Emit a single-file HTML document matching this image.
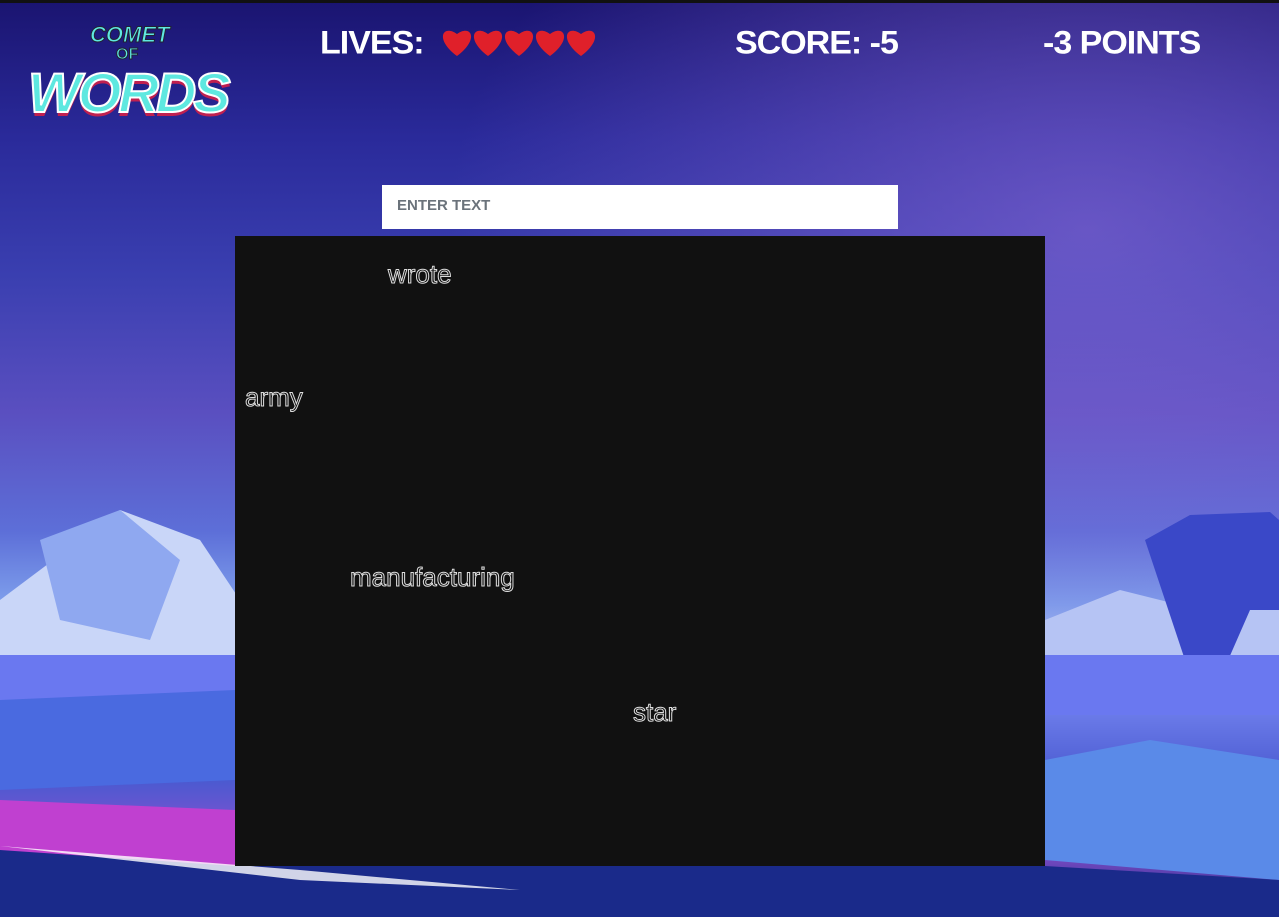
<!DOCTYPE html>
<html><head><style>
*{margin:0;padding:0;box-sizing:border-box}
body{width:1279px;height:917px;overflow:hidden;position:relative;font-family:"Liberation Sans",sans-serif;
background:linear-gradient(180deg,#1a1470 0%,#2a2a9a 15%,#3a3fb0 30%,#5a4fc0 45%,#5d6fd8 58%,#7fa0ec 66%,#b8c8f4 72%,#6a7ae8 78%,#4a5ad0 85%,#8a50d0 92%,#1a2a80 100%);}
.bgl{position:absolute;inset:0}
.hdr{position:absolute;color:#fff;font-weight:bold;font-size:34px;letter-spacing:0px;top:24px;transform:scaleY(0.95)}
.game{position:absolute;left:235px;top:236px;width:810px;height:630px;background:#111}
.w{position:absolute;font-size:26px;color:#111;-webkit-text-stroke:1px #ddd}
.inp{position:absolute;left:382px;top:185px;width:516px;height:44px;background:#fff;color:#6b737b;font-weight:bold;font-size:15px;padding:12px 15px}
</style></head><body>
<svg class="bgl" width="1279" height="917" viewBox="0 0 1279 917">
<defs><radialGradient id="g1" cx="0.85" cy="0.25" r="0.5"><stop offset="0" stop-color="#8a6ad8" stop-opacity=".6"/><stop offset="1" stop-color="#8a6ad8" stop-opacity="0"/></radialGradient></defs>
<rect width="1279" height="917" fill="url(#g1)"/>
<polygon points="0,600 120,510 200,540 240,600 235,700 0,700" fill="#c9d6f8"/>
<polygon points="40,540 120,510 180,560 150,640 60,620" fill="#8fa8f0"/>
<polygon points="1045,620 1120,590 1200,610 1279,600 1279,700 1045,700" fill="#b6c4f4"/>
<polygon points="1145,540 1190,515 1270,512 1279,520 1279,610 1250,610 1215,690 1195,690 1165,600" fill="#3a48c8"/>
<rect x="0" y="655" width="1279" height="60" fill="#6a78f0"/>
<polygon points="0,700 235,690 235,780 0,790" fill="#4a6ae0"/>
<polygon points="1045,760 1150,740 1279,760 1279,880 1045,860" fill="#5a8ae8"/>
<polygon points="0,800 235,810 235,866 0,870" fill="#c040d0"/>
<polygon points="0,850 235,866 1045,866 1279,880 1279,917 0,917" fill="#1a2a8a"/>
<polygon points="0,846 300,880 520,890 300,870" fill="#fff" opacity=".8"/>
<rect x="0" y="0" width="1279" height="3" fill="#111"/>
</svg>
<div style="position:absolute;left:28px;top:22px;width:200px;height:110px">
<div style="position:absolute;left:62px;top:0;color:#5ee8e0;font-weight:bold;font-size:22px;font-style:italic;-webkit-text-stroke:1px #223">COMET</div>
<div style="position:absolute;left:88px;top:24px;color:#5ee8e0;font-weight:bold;font-size:16px;-webkit-text-stroke:1px #223">OF</div>
<div style="position:absolute;left:0;top:38px;color:#5ee8e0;font-weight:bold;font-size:56px;font-style:italic;letter-spacing:-3px;-webkit-text-stroke:2px #fff;text-shadow:0 4px 0 #c02050">WORDS</div>
</div>
<div class="hdr" style="left:320px;letter-spacing:-1px">LIVES:</div>
<svg style="position:absolute;left:441px;top:27px" width="160" height="30" viewBox="0 0 160 30">
<g fill="#e0202a"><path id="h" d="M16 29 C-7 12 2 -3 16 7 C30 -3 39 12 16 29Z"/>
<use href="#h" x="31"/><use href="#h" x="62"/><use href="#h" x="93"/><use href="#h" x="124"/></g></svg>
<div class="hdr" style="left:735px;letter-spacing:-1px">SCORE: -5</div>
<div class="hdr" style="left:1043px;letter-spacing:-1px">-3 POINTS</div>
<div class="inp">ENTER TEXT</div>
<div class="game">
<div class="w" style="left:153px;top:23px">wrote</div>
<div class="w" style="left:10px;top:146px">army</div>
<div class="w" style="left:115px;top:326px">manufacturing</div>
<div class="w" style="left:398px;top:461px">star</div>
</div>
</body></html>
